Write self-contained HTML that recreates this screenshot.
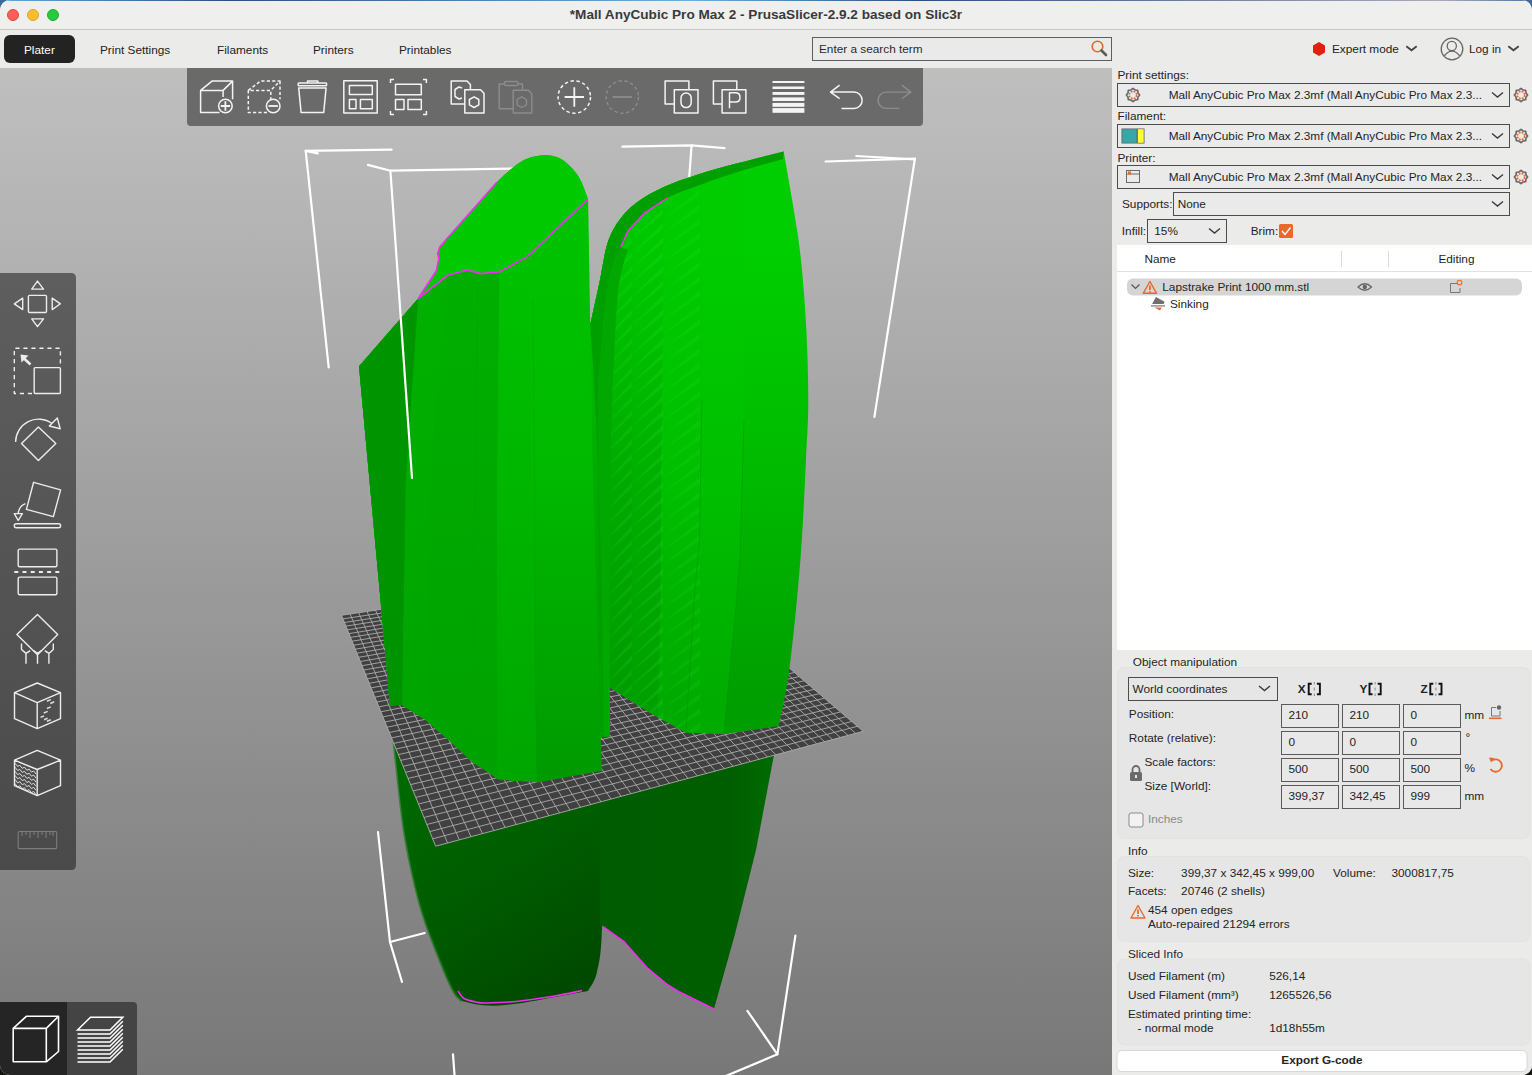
<!DOCTYPE html>
<html><head><meta charset="utf-8">
<style>
*{margin:0;padding:0;box-sizing:border-box}
html,body{width:1532px;height:1075px;overflow:hidden;background:#3d6a9c;font-family:"Liberation Sans",sans-serif;font-size:11.8px;color:#262626}
.a{position:absolute;white-space:nowrap}
#win{position:absolute;left:0;top:0;width:1532px;height:1075px;background:#EBEBEA;border-radius:10px;overflow:hidden}
#strip{position:absolute;left:0;top:0;width:1532px;height:1px;background:linear-gradient(90deg,#5fa8dc 0,#2a4f86 15%,#6ab0e0 45%,#2a4f86 60%,#aab 94%,#4a78a8 100%)}
#title{position:absolute;left:0;top:0;width:1532px;height:30px;background:#EFEFEE;border-bottom:1px solid #C4C4C2}
#title .t{position:absolute;left:0;width:1532px;top:7.5px;text-align:center;font-weight:bold;font-size:13.6px;color:#3A3A3A}
.tl{position:absolute;top:9px;width:12px;height:12px;border-radius:50%}
.tab{position:absolute;top:42.5px;font-size:11.8px;color:#222}
#view{position:absolute;left:0;top:68px;width:1112px;height:1007px;overflow:hidden}
#panel{position:absolute;left:1112px;top:68px;width:420px;height:1007px;background:#EAEAEA;overflow:hidden}
#panel .a{font-size:11.8px;color:#262626}
.t{position:absolute;white-space:nowrap;font-size:11.8px;line-height:14px;color:#242424}

</style></head><body>
<div style="position:absolute;left:0;top:1055px;width:1532px;height:20px;background:#151510"></div>
<div id="win">
<div id="title">
  <div class="tl" style="left:7px;background:#FE5F57;border:1px solid #E2463F"></div>
  <div class="tl" style="left:27px;background:#FEBC2E;border:1px solid #E1A325"></div>
  <div class="tl" style="left:47px;background:#28C840;border:1px solid #1DAD2B"></div>
  <div class="t">*Mall AnyCubic Pro Max 2 - PrusaSlicer-2.9.2 based on Slic3r</div>
</div>
<div id="strip"></div>
<div class="a" style="left:4px;top:35px;width:71px;height:28px;background:#232323;border-radius:6px"></div>
<div class="a tab" style="left:24px;color:#fff">Plater</div>
<div class="a tab" style="left:100px">Print Settings</div>
<div class="a tab" style="left:217px">Filaments</div>
<div class="a tab" style="left:313px">Printers</div>
<div class="a tab" style="left:399px">Printables</div>
<div class="a" style="left:812px;top:37px;width:300px;height:24px;border:1px solid #5E5E5E;background:#EAEAEA"></div>
<div class="a tab" style="left:819px;top:42px;color:#2a2a2a">Enter a search term</div>
<svg class="a" style="left:0;top:0" width="1532" height="68" viewBox="0 0 1532 68">
  <circle cx="1097.5" cy="46.5" r="5.3" fill="none" stroke="#E06A2A" stroke-width="1.6"/>
  <line x1="1101.5" y1="50.5" x2="1106" y2="55" stroke="#5a5a5a" stroke-width="2.6" stroke-linecap="round"/>
  <polygon points="1319,42 1325,45.5 1325,52.5 1319,56 1313,52.5 1313,45.5" fill="#E02010"/>
  <polyline points="1406.3,46.3 1411.5,50.3 1416.7,46.3" fill="none" stroke="#444" stroke-width="1.8"/>
  <circle cx="1452" cy="49" r="10.8" fill="none" stroke="#666" stroke-width="1.3"/>
  <circle cx="1451.8" cy="46" r="4.6" fill="none" stroke="#666" stroke-width="1.3"/>
  <path d="M1444.3 55.8 Q1452 46.5 1459.7 55.8" fill="none" stroke="#666" stroke-width="1.3"/>
  <polyline points="1508.3,46.3 1513.5,50.3 1518.7,46.3" fill="none" stroke="#444" stroke-width="1.8"/>
</svg>
<div class="a tab" style="left:1332px;top:41.7px">Expert mode</div>
<div class="a tab" style="left:1469px;top:41.7px">Log in</div>

<div id="view">
<svg width="1112" height="1007" viewBox="0 68 1112 1007" style="position:absolute;left:0;top:0">
<defs><linearGradient id="bg" x1="0" y1="68" x2="0" y2="1075" gradientUnits="userSpaceOnUse"><stop offset="0" stop-color="#BFBFBF"/><stop offset="1" stop-color="#787878"/></linearGradient><linearGradient id="f1" x1="0" y1="300" x2="0" y2="710" gradientUnits="userSpaceOnUse"><stop offset="0" stop-color="#009500"/><stop offset="1" stop-color="#009300"/></linearGradient><linearGradient id="f2" x1="0" y1="280" x2="0" y2="720" gradientUnits="userSpaceOnUse"><stop offset="0" stop-color="#00B100"/><stop offset="1" stop-color="#00A400"/></linearGradient><linearGradient id="f3" x1="0" y1="270" x2="0" y2="780" gradientUnits="userSpaceOnUse"><stop offset="0" stop-color="#00AF00"/><stop offset="1" stop-color="#00A100"/></linearGradient><linearGradient id="f4" x1="0" y1="260" x2="0" y2="780" gradientUnits="userSpaceOnUse"><stop offset="0" stop-color="#00C100"/><stop offset="0.5" stop-color="#00B400"/><stop offset="1" stop-color="#00A600"/></linearGradient><linearGradient id="f5" x1="0" y1="200" x2="0" y2="780" gradientUnits="userSpaceOnUse"><stop offset="0" stop-color="#00C300"/><stop offset="0.45" stop-color="#00BA00"/><stop offset="1" stop-color="#009A00"/></linearGradient><linearGradient id="r2" x1="0" y1="250" x2="0" y2="700" gradientUnits="userSpaceOnUse"><stop offset="0" stop-color="#00C600"/><stop offset="0.53" stop-color="#00AA00"/><stop offset="1" stop-color="#009C00"/></linearGradient><linearGradient id="r3" x1="0" y1="250" x2="0" y2="700" gradientUnits="userSpaceOnUse"><stop offset="0" stop-color="#00C800"/><stop offset="0.53" stop-color="#00AE00"/><stop offset="1" stop-color="#00A000"/></linearGradient><linearGradient id="r4" x1="0" y1="250" x2="0" y2="700" gradientUnits="userSpaceOnUse"><stop offset="0" stop-color="#00CA00"/><stop offset="0.53" stop-color="#00BE00"/><stop offset="1" stop-color="#00AA00"/></linearGradient><linearGradient id="r5" x1="0" y1="250" x2="0" y2="700" gradientUnits="userSpaceOnUse"><stop offset="0" stop-color="#00CC00"/><stop offset="0.53" stop-color="#00BE00"/><stop offset="1" stop-color="#00AC00"/></linearGradient><linearGradient id="r6" x1="0" y1="250" x2="0" y2="700" gradientUnits="userSpaceOnUse"><stop offset="0" stop-color="#00CE00"/><stop offset="0.53" stop-color="#00B800"/><stop offset="1" stop-color="#009E00"/></linearGradient><linearGradient id="gRx" x1="700" y1="0" x2="808" y2="0" gradientUnits="userSpaceOnUse"><stop offset="0" stop-color="rgba(0,0,0,0)"/><stop offset="1" stop-color="rgba(0,60,0,0.18)"/></linearGradient><linearGradient id="gSL" x1="420" y1="760" x2="560" y2="1000" gradientUnits="userSpaceOnUse"><stop offset="0" stop-color="#006A00"/><stop offset="0.6" stop-color="#005900"/><stop offset="1" stop-color="#004800"/></linearGradient><linearGradient id="gSR" x1="640" y1="0" x2="770" y2="0" gradientUnits="userSpaceOnUse"><stop offset="0" stop-color="#005C00"/><stop offset="0.7" stop-color="#005E00"/><stop offset="1" stop-color="#006A00"/></linearGradient></defs>
<rect x="0" y="68" width="1112" height="1007" fill="url(#bg)"/>
<polyline points="391.6,149.7 305.7,150.9 328.7,367.4" stroke="#FFFFFF" stroke-width="2.2" fill="none" stroke-linecap="round"/>
<line x1="305.7" y1="150.9" x2="317.8" y2="153.3" stroke="#FFFFFF" stroke-width="2.2" fill="none" stroke-linecap="round"/>
<polyline points="367.9,164.9 390.4,170.7 513.8,168.6" stroke="#FFFFFF" stroke-width="2.2" fill="none" stroke-linecap="round"/>
<polyline points="622.4,146.7 691.6,145.4 724.6,148.1" stroke="#FFFFFF" stroke-width="2.2" fill="none" stroke-linecap="round"/>
<line x1="691.6" y1="145.4" x2="689" y2="180" stroke="#FFFFFF" stroke-width="2.2" fill="none" stroke-linecap="round"/>
<polyline points="825.6,161.5 914.9,158.7 874.4,416.9" stroke="#FFFFFF" stroke-width="2.2" fill="none" stroke-linecap="round"/>
<line x1="856.3" y1="156" x2="914.9" y2="159.3" stroke="#FFFFFF" stroke-width="2.2" fill="none" stroke-linecap="round"/>
<path d="M386,660C386.7,667.5 388.3,688.3 390.0,705.0C391.7,721.7 393.5,738.3 396.0,760.0C398.5,781.7 401.0,811.0 405.0,835.0C409.0,859.0 414.5,884.0 420.0,904.0C425.5,924.0 432.5,940.7 438.0,955.0C443.5,969.3 449.0,982.3 453.0,990.0C457.0,997.7 460.5,999.2 462.0,1001.0C466.0,1001.8 477.0,1005.1 486.0,1005.6C495.0,1006.1 504.5,1005.2 516.0,1003.8C527.5,1002.4 543.0,999.1 555.0,997.0C567.0,994.9 582.5,992.0 588.0,991.0C589.5,987.8 594.7,982.5 597.0,972.0C599.3,961.5 601.0,956.3 602.0,928.0C603.0,899.7 602.5,840.0 603.0,802.0C603.5,764.0 604.7,717.0 605.0,700.0Z" fill="url(#gSL)"/>
<path d="M386,660C386.7,667.5 388.3,688.3 390.0,705.0C391.7,721.7 393.5,738.3 396.0,760.0C398.5,781.7 401.0,811.0 405.0,835.0C409.0,859.0 414.5,884.0 420.0,904.0C425.5,924.0 432.5,940.7 438.0,955.0C443.5,969.3 449.0,982.3 453.0,990.0C457.0,997.7 460.5,999.2 462.0,1001.0" fill="none" stroke="#007000" stroke-width="3" opacity="0.55"/>
<polygon points="600.0,700.0 600.0,924.5 624.0,941.7 648.0,968.7 666.0,983.7 678.0,991.2 714.0,1009.0 735.0,934.0 756.0,850.0 773.0,760.0 790.0,680.0" fill="url(#gSR)"/>
<polygon points="341.5,615.3 435.7,846.2 863.2,731.3 670.0,566.0" fill="#404040"/>
<path d="M341.5 615.3L435.7 846.2M341.5 615.3L670.0 566.0M350.1 614.0L447.6 843.0M342.9 618.9L673.2 568.7M358.6 612.7L459.4 839.8M344.4 622.5L676.4 571.5M367.0 611.5L471.0 836.7M345.9 626.1L679.6 574.2M375.4 610.2L482.5 833.6M347.4 629.8L682.9 577.1M383.7 609.0L493.9 830.6M349.0 633.6L686.3 579.9M392.0 607.7L505.2 827.5M350.5 637.4L689.6 582.8M400.1 606.5L516.3 824.5M352.1 641.2L693.0 585.7M408.3 605.3L527.3 821.6M353.7 645.2L696.5 588.7M416.3 604.1L538.2 818.7M355.3 649.2L700.0 591.7M424.3 602.9L548.9 815.8M357.0 653.2L703.5 594.7M432.2 601.7L559.6 812.9M358.6 657.3L707.1 597.8M440.1 600.5L570.1 810.1M360.3 661.5L710.7 600.9M447.9 599.3L580.5 807.3M362.1 665.7L714.4 604.0M455.7 598.2L590.8 804.5M363.8 670.0L718.1 607.2M463.4 597.0L601.0 801.8M365.6 674.4L721.9 610.4M471.0 595.9L611.1 799.1M367.4 678.8L725.7 613.7M478.6 594.7L621.1 796.4M369.2 683.3L729.6 617.0M486.1 593.6L631.0 793.7M371.1 687.9L733.5 620.4M493.6 592.5L640.7 791.1M373.0 692.5L737.5 623.8M501.0 591.4L650.4 788.5M374.9 697.2L741.5 627.2M508.3 590.3L660.0 785.9M376.9 702.0L745.6 630.7M515.6 589.2L669.4 783.4M378.9 706.9L749.7 634.2M522.9 588.1L678.8 780.9M380.9 711.8L753.9 637.8M530.1 587.0L688.1 778.4M382.9 716.9L758.2 641.5M537.2 585.9L697.3 775.9M385.0 722.0L762.5 645.1M544.3 584.9L706.4 773.5M387.2 727.2L766.9 648.9M551.4 583.8L715.4 771.0M389.3 732.5L771.3 652.7M558.4 582.8L724.3 768.6M391.5 737.9L775.8 656.5M565.3 581.7L733.1 766.3M393.8 743.4L780.4 660.4M572.2 580.7L741.8 763.9M396.0 749.0L785.0 664.4M579.0 579.6L750.5 761.6M398.3 754.6L789.7 668.4M585.8 578.6L759.0 759.3M400.7 760.4L794.4 672.5M592.6 577.6L767.5 757.0M403.1 766.3L799.2 676.6M599.3 576.6L775.9 754.8M405.6 772.3L804.1 680.8M605.9 575.6L784.2 752.5M408.0 778.4L809.1 685.0M612.5 574.6L792.5 750.3M410.6 784.6L814.2 689.3M619.1 573.6L800.6 748.1M413.2 790.9L819.3 693.7M625.6 572.7L808.7 745.9M415.8 797.4L824.5 698.2M632.1 571.7L816.7 743.8M418.5 804.0L829.8 702.7M638.5 570.7L824.6 741.7M421.2 810.7L835.1 707.3M644.9 569.8L832.5 739.6M424.0 817.5L840.6 711.9M651.2 568.8L840.3 737.5M426.8 824.5L846.1 716.7M657.5 567.9L848.0 735.4M429.7 831.6L851.7 721.5M663.8 566.9L855.6 733.3M432.7 838.8L857.4 726.3M670.0 566.0L863.2 731.3M435.7 846.2L863.2 731.3" stroke="#ABABAB" stroke-width="0.9" fill="none"/>
<clipPath id="clipR"><path d="M783.7,151.5C775.8,153.5 750.7,159.6 736.3,163.5C721.9,167.4 709.3,170.8 697.2,174.7C685.1,178.6 673.9,182.3 663.7,187.0C653.5,191.7 643.6,197.2 636.0,203.0C628.4,208.8 622.8,215.0 618.0,222.0C613.2,229.0 610.0,235.3 607.0,245.0C604.0,254.7 602.8,266.6 600.0,280.0C597.2,293.4 591.8,317.8 590.2,325.3L588,400L592,700L601.9,736.8L609.7,736.8L609.7,687.3L653.2,714.4L685.9,732.4L725,734.1L778.8,725.9C780.6,716.2 786.0,695.4 789.6,667.7C793.2,640.1 797.7,594.6 800.4,560.0C803.1,525.4 804.7,486.7 806.0,460.0C807.3,433.3 808.3,422.4 808.3,400.0C808.3,377.6 807.4,349.5 806.1,325.4C804.8,301.3 802.8,276.5 800.5,255.6C798.2,234.7 794.9,217.2 792.1,199.8C789.3,182.5 785.1,159.6 783.7,151.5Z"/></clipPath>
<g clip-path="url(#clipR)">
<rect x="585" y="140" width="230" height="605" fill="url(#r6)"/>
<polygon points="585.0,140.0 743.5,140.0 744.0,420.0 740.0,560.0 736.7,600.0 727.0,700.0 723.0,745.0 585.0,745.0" fill="url(#r5)"/>
<polygon points="585.0,140.0 701.5,140.0 701.9,400.0 699.5,540.0 694.2,600.0 687.9,700.0 685.5,745.0 585.0,745.0" fill="url(#r4)"/>
<polygon points="585.0,140.0 664.0,140.0 662.0,400.0 660.5,600.0 657.8,717.3 657.0,745.0 585.0,745.0" fill="url(#r3)"/>
<rect x="585" y="140" width="47" height="605" fill="url(#r2)"/>
<pattern id="stp" patternUnits="userSpaceOnUse" x="632" y="0" width="31" height="14.4" patternTransform="skewY(-38.7)"><polygon points="0,11 31,5.5 31,11" fill="#30FF30" opacity="0.14"/></pattern>
<pattern id="stp2" patternUnits="userSpaceOnUse" x="663" y="5" width="37" height="14.4" patternTransform="skewY(-33)"><polygon points="0,11 37,5.5 37,11" fill="#30FF30" opacity="0.10"/></pattern>
<pattern id="stp3" patternUnits="userSpaceOnUse" x="606" y="9" width="26" height="14.4" patternTransform="skewY(-42)"><polygon points="0,11 26,5.5 26,11" fill="#30FF30" opacity="0.12"/></pattern>
<rect x="632" y="200" width="31" height="540" fill="url(#stp)"/>
<rect x="663" y="190" width="37" height="550" fill="url(#stp2)"/>
<rect x="606" y="240" width="26" height="500" fill="url(#stp3)"/>
<polyline points="701.9,400.0 699.5,540.0 694.2,600.0 687.9,700.0 685.5,745.0" stroke="#008C00" stroke-width="0.8" opacity="0.5" fill="none"/>
<polyline points="744.0,420.0 740.0,560.0 736.7,600.0 727.0,700.0 723.0,745.0" stroke="#008C00" stroke-width="0.8" opacity="0.5" fill="none"/>
</g>
<path d="M602,736.8C601.4,707.3 599.1,615.6 598.5,560.0C597.9,504.4 598.0,436.6 598.4,403.0C598.8,369.4 599.2,377.2 600.6,358.6C602.0,340.0 604.8,307.7 607.0,291.6C609.2,275.5 611.7,269.4 614.0,262.0C616.3,254.6 619.6,249.5 620.7,247.0L628,250C627.3,252.0 625.7,255.1 624.0,262.0C622.3,268.9 619.7,275.5 618.0,291.6C616.3,307.7 615.0,340.0 614.0,358.6C613.0,377.2 612.7,379.4 612.0,403.0C611.3,426.6 610.4,452.2 610.0,500.0C609.6,547.8 609.8,650.5 609.7,690.0C609.7,729.5 609.7,729.0 609.7,736.8Z" fill="#00A800"/>
<path d="M783.7,151.5C775.8,153.5 750.7,159.6 736.3,163.5C721.9,167.4 709.3,170.8 697.2,174.7C685.1,178.6 673.9,182.3 663.7,187.0C653.5,191.7 643.6,197.2 636.0,203.0C628.4,208.8 622.8,215.0 618.0,222.0C613.2,229.0 610.0,235.3 607.0,245.0C604.0,254.7 602.8,266.6 600.0,280.0C597.2,293.4 591.8,317.8 590.2,325.3C591.0,337.8 593.2,360.9 595.0,400.0C596.8,439.1 599.5,503.9 601.0,560.0C602.5,616.1 603.5,707.3 604.0,736.8L602,736.8C601.4,707.3 599.1,615.6 598.5,560.0C597.9,504.4 598.0,436.6 598.4,403.0C598.8,369.4 599.2,377.2 600.6,358.6C602.0,340.0 604.8,307.7 607.0,291.6C609.2,275.5 611.7,269.4 614.0,262.0C616.3,254.6 618.3,252.3 620.7,247.0C623.1,241.7 624.4,236.0 628.5,230.2C632.6,224.4 638.8,217.8 645.3,212.4C651.8,207.0 659.0,202.3 667.6,197.9C676.2,193.5 685.6,190.2 697.0,186.0C708.4,181.8 721.7,177.0 736.0,172.5C750.3,168.0 775.2,161.2 783.0,159.0Z" fill="#009F00"/>
<clipPath id="clipL"><path d="M496.9,182.3C497.6,181.6 498.4,180.5 501.2,177.9C504.0,175.3 509.6,170.1 513.8,166.9C518.0,163.8 521.8,160.9 526.5,159.0C531.2,157.1 537.0,155.6 542.3,155.3C547.6,155.0 553.4,155.5 558.1,157.4C562.9,159.3 567.1,163.2 570.8,166.9C574.5,170.6 577.3,174.1 580.2,179.5C583.1,184.9 586.8,196.0 588.1,199.3L589,250L590.2,325.3L593,480L601.9,770.7L538.8,782.2L499.0,779.6L481.4,767.8L473.6,762.9L452.1,743.1L425.1,719.5L401.9,704.7L389.8,705.6L386.0,660.0L359.0,366.2L418.2,298.5L436.4,270.7L438.8,258.6L437.6,253.7L440.0,246.5L496.9,182.3Z"/></clipPath>
<g clip-path="url(#clipL)">
<rect x="340" y="150" width="270" height="640" fill="url(#f5)"/>
<polygon points="340,150 527.1,150 527.1,256.9 533,560 537,790 340,790" fill="url(#f4)"/>
<polygon points="340,150 499.3,150 499.3,271.9 497,480 497,790 340,790" fill="url(#f3)"/>
<polygon points="340,150 447.3,150 447.3,275.5 430,480 426,790 340,790" fill="url(#f2)"/>
<polygon points="340,150 418.2,150 418.2,298.5 405.8,480 402,705 402,790 340,790" fill="url(#f1)"/>
<path d="M478,280 L471,780" stroke="#009E00" stroke-width="0.7" opacity="0.4"/>
<path d="M533,300 L537,780" stroke="#009800" stroke-width="0.7" opacity="0.4"/>
</g>
<path d="M418.2,298.5L436.4,270.7L438.8,258.6L437.6,253.7L440,246.5L496.9,182.3C497.6,181.6 498.4,180.5 501.2,177.9C504.0,175.3 509.6,170.1 513.8,166.9C518.0,163.8 521.8,160.9 526.5,159.0C531.2,157.1 537.0,155.6 542.3,155.3C547.6,155.0 553.4,155.5 558.1,157.4C562.9,159.3 567.1,163.2 570.8,166.9C574.5,170.6 577.3,174.1 580.2,179.5C583.1,184.9 586.8,196.0 588.1,199.3L527.1,256.9L499.3,271.9L481.1,273.6L466.6,269.9L447.3,275.5Z" fill="#00C900"/>
<polyline points="418.2,298.5 436.4,270.7 438.8,258.6 437.6,253.7 440,246.5 496.9,182.3" stroke="#F22CF2" stroke-width="1.6" fill="none" stroke-linejoin="round"/>
<polyline points="418.2,298.5 447.3,275.5 466.6,269.9 481.1,273.6 499.3,271.9 527.1,256.9 587.6,199.3" stroke="#F22CF2" stroke-width="1.6" fill="none" stroke-linejoin="round"/>
<polyline points="620.7,247 628.5,230.2 645.3,212.4 667.6,197.9" stroke="#F22CF2" stroke-width="1.6" fill="none" stroke-linejoin="round" stroke-width="1.1"/>
<path d="M458,991C459.0,992.2 461.0,996.7 464.0,998.5C467.0,1000.3 472.3,1001.2 476.0,1002.0C479.7,1002.8 479.3,1003.1 486.0,1003.0C492.7,1002.9 504.5,1002.7 516.0,1001.5C527.5,1000.3 544.0,997.8 555.0,996.0C566.0,994.2 577.5,991.4 582.0,990.5" stroke="#F22CF2" stroke-width="1.6" fill="none" stroke-linejoin="round" stroke-width="1.3"/>
<polyline points="603,926.7 624,941.7 648,968.7 666,983.7 678,991.2 714,1009" stroke="#F22CF2" stroke-width="1.6" fill="none" stroke-linejoin="round" stroke-width="1.3"/>
<line x1="390.4" y1="170.7" x2="412" y2="478" stroke="#FFFFFF" stroke-width="2.2" fill="none" stroke-linecap="round"/>
<polyline points="378,832 390,942 402,982" stroke="#FFFFFF" stroke-width="2.2" fill="none" stroke-linecap="round"/>
<line x1="390" y1="942" x2="424.6" y2="933" stroke="#FFFFFF" stroke-width="2.2" fill="none" stroke-linecap="round"/>
<line x1="453" y1="1054.3" x2="454.6" y2="1076" stroke="#FFFFFF" stroke-width="2.2" fill="none" stroke-linecap="round"/>
<polyline points="795.4,935.7 777.4,1054.3 723.4,1077" stroke="#FFFFFF" stroke-width="2.2" fill="none" stroke-linecap="round"/>
<line x1="747.4" y1="1010.8" x2="777.4" y2="1054.3" stroke="#FFFFFF" stroke-width="2.2" fill="none" stroke-linecap="round"/>
<defs>
<linearGradient id="ltb" x1="0" y1="273" x2="0" y2="870" gradientUnits="userSpaceOnUse"><stop offset="0" stop-color="#5E5E5E"/><stop offset="1" stop-color="#4A4A4A"/></linearGradient>
</defs>
<path d="M187,68 H923 V122 Q923,126 919,126 H191 Q187,126 187,122 Z" fill="#6A6A6A"/>
<g fill="none" stroke="#F4F4F4" stroke-width="1.5" stroke-linejoin="round">
 <!-- add -->
 <path d="M219.5,112.6 H200.6 V90.4 H223.1 V97 M200.6,90.4 L212,81.1 H232.6 L223.1,90.4 M232.6,81.1 V99.3"/>
 <circle cx="225.4" cy="106" r="6.8"/>
 <path d="M225.4,101.3 V110.7 M220.7,106 H230.1" stroke-width="1.8"/>
 <!-- delete dashed -->
 <path d="M267,112.6 H248.3 V90.4 H270.8 V99 M248.3,90.4 L260.5,81.1 H280 L270.8,90.4 M280,81.1 V99.3" stroke-dasharray="3.2 2.2"/>
 <circle cx="273.2" cy="106" r="6.8"/>
 <path d="M268.5,106 H277.9" stroke-width="1.8"/>
 <!-- trash -->
 <rect x="298.2" y="83" width="28.4" height="2.8" rx="0.8"/>
 <path d="M307.5,83 V81 H317.8 V83"/>
 <path d="M298.7,87.9 H326.1 L323.7,112.6 H301.1 Z"/>
 <!-- arrange -->
 <rect x="343.8" y="80.7" width="33.4" height="32.4"/>
 <rect x="349.4" y="85.5" width="22.9" height="9"/>
 <rect x="349.4" y="99.4" width="6.6" height="9.3"/>
 <rect x="360.4" y="99.4" width="11.9" height="9.3"/>
 <!-- arrange selection -->
 <path d="M390.5,83 V79.5 H394 M423,79.5 H426.4 V83 M426.4,111 V114.5 H423 M394,114.5 H390.5 V111"/>
 <rect x="395.5" y="84.3" width="25.8" height="10.5"/>
 <rect x="395.5" y="99.4" width="8.5" height="10.2"/>
 <rect x="408" y="99.4" width="13.3" height="10.2"/>
 <!-- copy -->
 <path d="M464.8,104.1 H451.2 V80.9 H467 L470.4,84.5 V89.7"/>
 <path d="M464.8,89.7 H480.5 L484,93.3 V113 H464.8 Z"/>
 <path d="M474.1,96.8 L478.8,99.5 V104.8 L474.1,107.5 L469.4,104.8 V99.5 Z"/>
 <path d="M462,88 L459,87 L455,89.5 V96.5 L459,99 L462,98"/>
 <!-- plus circle -->
 <circle cx="574.3" cy="97" r="16.2" stroke-dasharray="3.4 2.6"/>
 <path d="M574.3,87.3 V106.7 M564.6,97 H584" stroke-width="1.8"/>
 <!-- copy O -->
 <path d="M674.3,103.9 H665.1 V81 H688.9 V89.8"/>
 <rect x="674.3" y="89.8" width="23.7" height="23.2"/>
 <rect x="681" y="93" width="10.2" height="14.6" rx="5"/>
 <!-- copy P -->
 <path d="M722.1,103.9 H713.4 V81 H736.8 V89.8"/>
 <rect x="722.1" y="89.8" width="23.8" height="23.2"/>
 <path d="M729.5,108.3 V92.8 H735.5 Q740,92.8 740,97.5 Q740,102 735.5,102 H729.5"/>
 <!-- undo -->
 <path d="M839.6,85.1 L830.5,92.1 L839.6,98.7 M830.5,92.1 H854 A8.15,8.15 0 0 1 854,108.4 H841.5"/>
</g>
<g fill="#F4F4F4">
 <rect x="772.5" y="81" width="31.9" height="2"/>
 <rect x="772.5" y="86.5" width="31.9" height="2.5"/>
 <rect x="772.5" y="92" width="31.9" height="2.9"/>
 <rect x="772.5" y="97.4" width="31.9" height="3.6"/>
 <rect x="772.5" y="102.9" width="31.9" height="3.9"/>
 <rect x="772.5" y="108.1" width="31.9" height="4.7"/>
</g>
<g fill="none" stroke="#8C8C8C" stroke-width="1.4" stroke-linejoin="round">
 <!-- paste disabled -->
 <path d="M513.2,108.7 H499.2 V84 H504 M518,84 H522.5 V90.2"/>
 <rect x="504.5" y="81.5" width="13.5" height="4" rx="1"/>
 <path d="M513.2,90.2 H528.3 L531.8,93.8 V113 H513.2 Z"/>
 <path d="M521.8,96.8 L526.5,99.5 V104.8 L521.8,107.5 L517.1,104.8 V99.5 Z"/>
 <!-- minus disabled -->
 <circle cx="622.3" cy="97" r="16.2" stroke-dasharray="3.4 2.6"/>
 <path d="M612.6,97 H632" stroke-width="1.8"/>
 <!-- redo -->
 <path d="M901.8,85.1 L910.9,92.1 L901.8,98.7 M910.9,92.1 H886.2 A8.15,8.15 0 0 0 886.2,108.4 H899.4"/>
</g>
<!-- left toolbar -->
<path d="M0,273 H71 Q76,273 76,278 V865 Q76,870 71,870 H0 Z" fill="url(#ltb)"/>
<g fill="none" stroke="#EDEDED" stroke-width="1.4" stroke-linejoin="round">
 <rect x="28.4" y="295.4" width="18.1" height="17.1" rx="1.2"/>
 <path d="M37.5,281.1 L43.5,289.1 H31.7 Z M37.5,326.6 L43.5,318.9 H31.7 Z M14.3,303.8 L22.7,298.2 V309.6 Z M60.4,303.8 L52.2,298.2 V309.6 Z"/>
 <path d="M32,393.5 H14.3 V348.3 H60.4 V366" stroke-dasharray="4.2 3.8"/>
 <rect x="34.2" y="367.6" width="26.2" height="25.9" rx="1"/>
 <path d="M38.4,427.1 L55.8,443.6 L38.4,460.6 L21.5,443.6 Z"/>
 <path d="M15.6,442 A23,23 0 0 1 52.1,423.5"/>
 <path d="M57.3,418 L60.2,428.7 L49.3,426 Z"/>
 <path d="M33.6,482.3 L60.6,489.9 L53.4,516.6 L26.4,509.4 Z"/>
 <rect x="14.3" y="523.8" width="46.3" height="3.9" rx="1.9"/>
 <path d="M25.4,503.6 Q19,506 18.2,513.6"/>
 <path d="M14.3,513.6 H22.4 L18.2,520.5 Z"/>
 <rect x="18.2" y="549.1" width="38.7" height="17.6" rx="1.5"/>
 <path d="M14.3,571.9 H59.9" stroke-width="2" stroke-dasharray="4 4.2"/>
 <rect x="18.2" y="577.1" width="38.7" height="17.6" rx="1.5"/>
 <path d="M37.5,614.5 L57.7,634.5 L37.5,654.7 L16.9,634.5 Z"/>
 <path d="M26,663.8 V653.4 L21.5,649.5 V643.6 M26,653.4 L30.2,650.7 M37.5,663.8 V653.4 L33.5,650.5 M37.5,653.4 L41.5,650.5 M48.9,663.8 V653.4 L53.3,649.5 V643.6 M48.9,653.4 L44.8,650.7"/>
 <path d="M37.2,683 L60.5,692.7 V718.7 L37.2,728.6 L14.5,718.7 V692.7 Z M14.5,692.7 L37.2,702.6 L60.5,692.7 M37.2,702.6 V728.6"/>
 <path d="M37.2,750.4 L60.5,760.2 V785.7 L37.2,795.6 L14.5,785.7 V760.2 Z M14.5,760.2 L37.2,769.5 L60.5,760.2 M37.2,769.5 V795.6"/>
</g>
<g fill="none" stroke="#EDEDED" stroke-width="1" opacity="0.9">
 <path d="M46.9,701.2 L50.8,699.6 M50.3,703.5 L54.2,701.8 M46.9,708.5 L50.8,706.9 M43.8,713 L47.7,711.4 M40.5,717.4 L44,716 M44.1,719.7 L47.6,718.2 M46.9,721.3 L50.8,719.7" stroke-width="1.5"/>
<g clip-path="url(#fz)"><path d="M13,764.5 l2.3,-1.1 l2.3,3.0 l2.3,-1.1 l2.3,3.0 l2.3,-1.1 l2.3,3.0 l2.3,-1.1 l2.3,3.0 l2.3,-1.1 l2.3,3.0 M13,768.6 l2.3,-1.1 l2.3,3.0 l2.3,-1.1 l2.3,3.0 l2.3,-1.1 l2.3,3.0 l2.3,-1.1 l2.3,3.0 l2.3,-1.1 l2.3,3.0 M13,772.7 l2.3,-1.1 l2.3,3.0 l2.3,-1.1 l2.3,3.0 l2.3,-1.1 l2.3,3.0 l2.3,-1.1 l2.3,3.0 l2.3,-1.1 l2.3,3.0 M13,776.8 l2.3,-1.1 l2.3,3.0 l2.3,-1.1 l2.3,3.0 l2.3,-1.1 l2.3,3.0 l2.3,-1.1 l2.3,3.0 l2.3,-1.1 l2.3,3.0 M13,780.9 l2.3,-1.1 l2.3,3.0 l2.3,-1.1 l2.3,3.0 l2.3,-1.1 l2.3,3.0 l2.3,-1.1 l2.3,3.0 l2.3,-1.1 l2.3,3.0 M13,785.0 l2.3,-1.1 l2.3,3.0 l2.3,-1.1 l2.3,3.0 l2.3,-1.1 l2.3,3.0 l2.3,-1.1 l2.3,3.0 l2.3,-1.1 l2.3,3.0 M13,789.1 l2.3,-1.1 l2.3,3.0 l2.3,-1.1 l2.3,3.0 l2.3,-1.1 l2.3,3.0 l2.3,-1.1 l2.3,3.0 l2.3,-1.1 l2.3,3.0 "/></g>
</g>
<g fill="none" stroke="#7C7C7C" stroke-width="1.1">
 <rect x="18.2" y="831.5" width="38.5" height="17.1" rx="1"/>
 <path d="M22,832 V836 M26,832 V835 M30,832 V838 M34,832 V835 M38,832 V838 M42,832 V835 M46,832 V838 M50,832 V835 M53,832 V836"/>
</g>
<path d="M20.5,354.5 L28.5,355.5 L21.5,362.5 Z" fill="#EDEDED"/>
<line x1="24" y1="358.5" x2="30.5" y2="364.5" stroke="#EDEDED" stroke-width="2.6"/>
<clipPath id="fz"><path d="M14.5,760.2 L37.2,769.5 V795.6 L14.5,785.7 Z"/></clipPath>
<!-- view switcher -->
<path d="M0,1002 H67 V1075 H0 Z" fill="#252525"/>
<path d="M67,1002 H133 Q137,1002 137,1006 V1075 H67 Z" fill="#444444"/>
<g fill="none" stroke="#FFFFFF" stroke-width="1.6" stroke-linejoin="round">
 <path d="M13.5,1053 V1020 H46 V1061.5 H13.5 Z" opacity="0"/>
 <path d="M13.2,1028.4 H46.3 V1061.8 H13.2 Z M13.2,1028.4 L26.3,1016.3 H58.5 L46.3,1028.4 M58.5,1016.3 V1051.5 L46.3,1061.8"/>
</g>
<g fill="none" stroke="#FFFFFF" stroke-width="1.5">
 <path d="M77.5,1030 L90.5,1017.3 H122.8 L110,1030 Z"/>
 <path d="M77.5,1034 H110 L122.8,1021.3 M77.5,1038 H110 L122.8,1025.3 M77.5,1042 H110 L122.8,1029.3 M77.5,1046 H110 L122.8,1033.3 M77.5,1050 H110 L122.8,1037.3 M77.5,1054 H110 L122.8,1041.3 M77.5,1058 H110 L122.8,1045.3 M77.5,1062 H110 L122.8,1049.3"/>
</g>

</svg>
</div>
<div id="panel">
<svg width="420" height="1007" viewBox="1112 68 420 1007" style="position:absolute;left:0;top:0">
<rect x="1112" y="68" width="420" height="1007" fill="#EBEBEA"/>
<g fill="#EAEAEA" stroke="#4C4C4C" stroke-width="1">
 <rect x="1117.5" y="83.5" width="392" height="23"/>
 <rect x="1117.5" y="124.5" width="392" height="23"/>
 <rect x="1117.5" y="165.5" width="392" height="23"/>
 <rect x="1173.5" y="192.5" width="336" height="23"/>
 <rect x="1147.5" y="219.5" width="79" height="23"/>
</g>
<g fill="none" stroke="#3A3A3A" stroke-width="1.4">
 <polyline points="1492,92.5 1497.5,97 1503,92.5"/>
 <polyline points="1492,133.5 1497.5,138 1503,133.5"/>
 <polyline points="1492,174.5 1497.5,179 1503,174.5"/>
 <polyline points="1492,201.5 1497.5,206 1503,201.5"/>
 <polyline points="1209,228.5 1214.5,233 1220,228.5"/>
</g>
<!-- gears -->
<g id="gear">
 <polygon points="1133.00,88.40 1135.07,90.01 1137.67,90.33 1137.99,92.93 1139.60,95.00 1137.99,97.07 1137.67,99.67 1135.07,99.99 1133.00,101.60 1130.93,99.99 1128.33,99.67 1128.01,97.07 1126.40,95.00 1128.01,92.93 1128.33,90.33 1130.93,90.01" fill="none" stroke="#6A6A6A" stroke-width="1.7" stroke-linejoin="round"/>
 <circle cx="1133" cy="95" r="3.6" fill="none" stroke="#E8692A" stroke-width="1.5" stroke-dasharray="1.9 0.95"/>
</g>
<use href="#gear" x="388" y="0"/>
<use href="#gear" x="388" y="41"/>
<use href="#gear" x="388" y="82"/>
<!-- filament swatch -->
<rect x="1121.5" y="128.5" width="23" height="15" fill="#5C5A66"/>
<rect x="1122.3" y="129.2" width="14.3" height="13.6" fill="#3BA6A8"/>
<rect x="1137.8" y="129.2" width="5.9" height="13.6" fill="#FFFF33"/>
<!-- printer icon -->
<rect x="1126.5" y="170.5" width="13" height="12" fill="none" stroke="#6A6A6A" stroke-width="1"/>
<line x1="1126.5" y1="174" x2="1139.5" y2="174" stroke="#6A6A6A" stroke-width="1"/>
<rect x="1128" y="171.5" width="3" height="3" fill="#E8692A"/>
<!-- brim checkbox -->
<rect x="1279" y="224" width="14" height="14" rx="1.5" fill="#E8692A"/>
<polyline points="1282,231 1285,234.5 1290.5,227.5" fill="none" stroke="#FFFFFF" stroke-width="1.3"/>
<!-- list -->
<rect x="1117" y="245" width="415" height="405" fill="#FFFFFF"/>
<line x1="1117" y1="271.5" x2="1532" y2="271.5" stroke="#E2E2E2" stroke-width="1"/>
<line x1="1341.5" y1="251" x2="1341.5" y2="267" stroke="#DADADA" stroke-width="1"/>
<line x1="1388.5" y1="251" x2="1388.5" y2="267" stroke="#DADADA" stroke-width="1"/>
<rect x="1127" y="278.5" width="395" height="17" rx="6" fill="#D5D5D5"/>
<polyline points="1131.5,284.5 1135.5,288.5 1139.5,284.5" fill="none" stroke="#555" stroke-width="1.2"/>
<path d="M1149.9,281.5 L1156.6,293.3 H1143.2 Z" fill="none" stroke="#E8692A" stroke-width="1.4" stroke-linejoin="round"/>
<line x1="1149.9" y1="285.5" x2="1149.9" y2="290" stroke="#E8692A" stroke-width="1.8"/>
<rect x="1149" y="291.2" width="1.8" height="1.5" fill="#E8692A"/>
<path d="M1358,287 Q1364.8,280.5 1371.5,287 Q1364.8,293.5 1358,287 Z" fill="none" stroke="#666" stroke-width="1.2"/>
<circle cx="1364.8" cy="287" r="2.2" fill="#666"/>
<path d="M1457,283.5 H1450.5 V292.5 H1460 V288" fill="none" stroke="#777" stroke-width="1"/>
<circle cx="1459.5" cy="282.5" r="2.3" fill="none" stroke="#E8692A" stroke-width="1.1"/>
<path d="M1156,297.1 L1164.6,301.8 L1163.5,303.9 H1152.1 Z" fill="#6F6F6F"/>
<rect x="1150.9" y="305.2" width="14.1" height="1.4" fill="#8A8A8A"/>
<path d="M1154.6,307.6 H1161.7 L1160,310.5 Z" fill="#E8692A"/>
<!-- groups -->
<rect x="1117.5" y="667.5" width="412.5" height="171" rx="7" fill="#E6E6E6" stroke="#E2E2E2"/>
<rect x="1117.5" y="856.5" width="412.5" height="85" rx="7" fill="#E6E6E6" stroke="#E2E2E2"/>
<rect x="1117.5" y="959" width="412.5" height="86" rx="7" fill="#E6E6E6" stroke="#E2E2E2"/>
<rect x="1128.5" y="677.5" width="149" height="23" fill="#E6E6E6" stroke="#4C4C4C"/>
<polyline points="1259,686 1264.5,690.5 1270,686" fill="none" stroke="#3A3A3A" stroke-width="1.4"/>
<path d="M1311.7,683.8 H1308.7 V694.2 H1311.7 M1316.9,683.8 H1319.9 V694.2 H1316.9" fill="none" stroke="#111" stroke-width="1.9"/><path d="M1314.3,682 V684.5 M1314.3,693.5 V696 M1314.3,687.5 V690.5" stroke="#888" stroke-width="1"/><path d="M1372.5,683.8 H1369.5 V694.2 H1372.5 M1377.7,683.8 H1380.7 V694.2 H1377.7" fill="none" stroke="#111" stroke-width="1.9"/><path d="M1375.1,682 V684.5 M1375.1,693.5 V696 M1375.1,687.5 V690.5" stroke="#888" stroke-width="1"/><path d="M1433.3,683.8 H1430.3 V694.2 H1433.3 M1438.5,683.8 H1441.5 V694.2 H1438.5" fill="none" stroke="#111" stroke-width="1.9"/><path d="M1435.9,682 V684.5 M1435.9,693.5 V696 M1435.9,687.5 V690.5" stroke="#888" stroke-width="1"/>
<g fill="#E8E8E8" stroke="#5A5A5A" stroke-width="1">
 <rect x="1281.5" y="704.5" width="57" height="23"/><rect x="1342.5" y="704.5" width="57" height="23"/><rect x="1403.5" y="704.5" width="57" height="23"/>
 <rect x="1281.5" y="731.5" width="57" height="23"/><rect x="1342.5" y="731.5" width="57" height="23"/><rect x="1403.5" y="731.5" width="57" height="23"/>
 <rect x="1281.5" y="758.5" width="57" height="23"/><rect x="1342.5" y="758.5" width="57" height="23"/><rect x="1403.5" y="758.5" width="57" height="23"/>
 <rect x="1281.5" y="785.5" width="57" height="23"/><rect x="1342.5" y="785.5" width="57" height="23"/><rect x="1403.5" y="785.5" width="57" height="23"/>
</g>
<!-- drop to bed icon -->
<path d="M1496,707.5 H1491.5 V716 H1500 V711" fill="none" stroke="#777" stroke-width="1"/>
<circle cx="1499" cy="707.5" r="2.2" fill="#666"/>
<rect x="1489" y="717.5" width="12.5" height="1.6" fill="#E8692A"/>
<!-- reset arrow -->
<path d="M1492,760.5 A6.2,6.2 0 1 1 1490.5,769" fill="none" stroke="#E8692A" stroke-width="1.8"/>
<path d="M1489,757.5 L1494.5,758 L1491,762.5 Z" fill="#E8692A"/>
<!-- lock -->
<rect x="1130" y="772" width="12" height="9" rx="1.5" fill="#6A6A6A"/>
<path d="M1132.5,772 V769.5 A3.5,3.5 0 0 1 1139.5,769.5 V772" fill="none" stroke="#6A6A6A" stroke-width="1.8"/>
<rect x="1135" y="775" width="2" height="3" fill="#E6E6E6"/>
<!-- inches checkbox -->
<rect x="1129" y="813" width="14" height="14" rx="2" fill="#F2F2F2" stroke="#8A8A8A" stroke-width="1"/>
<!-- warning -->
<path d="M1138,905.5 L1145,918 H1131 Z" fill="none" stroke="#E8692A" stroke-width="1.4" stroke-linejoin="round"/>
<line x1="1138" y1="909.5" x2="1138" y2="914" stroke="#E8692A" stroke-width="1.8"/>
<rect x="1137.1" y="915" width="1.8" height="1.5" fill="#E8692A"/>
<!-- export button -->
<rect x="1117" y="1050.5" width="410" height="21" rx="5" fill="#FFFFFF" stroke="#D0D0D0" stroke-width="0.8"/>

</svg>
</div>
<div class="t" style="left:1117.5px;top:68.0px;">Print settings:</div>
<div class="t" style="left:1168.7px;top:88.0px;">Mall AnyCubic Pro Max 2.3mf (Mall AnyCubic Pro Max 2.3...</div>
<div class="t" style="left:1117.5px;top:109.4px;">Filament:</div>
<div class="t" style="left:1168.7px;top:129.3px;">Mall AnyCubic Pro Max 2.3mf (Mall AnyCubic Pro Max 2.3...</div>
<div class="t" style="left:1117.5px;top:150.7px;">Printer:</div>
<div class="t" style="left:1168.7px;top:170.3px;">Mall AnyCubic Pro Max 2.3mf (Mall AnyCubic Pro Max 2.3...</div>
<div class="t" style="left:1122px;top:196.7px;">Supports:</div>
<div class="t" style="left:1177.7px;top:196.7px;">None</div>
<div class="t" style="left:1121.8px;top:223.7px;">Infill:</div>
<div class="t" style="left:1154.3px;top:223.7px;">15%</div>
<div class="t" style="left:1250.7px;top:223.7px;">Brim:</div>
<div class="t" style="left:1144.4px;top:252.0px;">Name</div>
<div class="t" style="left:1438.4px;top:252.0px;">Editing</div>
<div class="t" style="left:1162.3px;top:279.6px;">Lapstrake Print 1000 mm.stl</div>
<div class="t" style="left:1170px;top:296.7px;">Sinking</div>
<div class="t" style="left:1132.8px;top:654.9px;">Object manipulation</div>
<div class="t" style="left:1132.5px;top:682.0px;">World coordinates</div>
<div class="t" style="left:1297.7px;top:682.0px;font-weight:bold">X</div>
<div class="t" style="left:1359.6px;top:682.0px;font-weight:bold">Y</div>
<div class="t" style="left:1420.4px;top:682.0px;font-weight:bold">Z</div>
<div class="t" style="left:1128.8px;top:707.0px;">Position:</div>
<div class="t" style="left:1128.8px;top:730.7px;">Rotate (relative):</div>
<div class="t" style="left:1144.4px;top:754.9px;">Scale factors:</div>
<div class="t" style="left:1144.4px;top:778.9px;">Size [World]:</div>
<div class="t" style="left:1288.5px;top:707.5px;">210</div>
<div class="t" style="left:1349.5px;top:707.5px;">210</div>
<div class="t" style="left:1410.5px;top:707.5px;">0</div>
<div class="t" style="left:1288.5px;top:734.5px;">0</div>
<div class="t" style="left:1349.5px;top:734.5px;">0</div>
<div class="t" style="left:1410.5px;top:734.5px;">0</div>
<div class="t" style="left:1288.5px;top:761.5px;">500</div>
<div class="t" style="left:1349.5px;top:761.5px;">500</div>
<div class="t" style="left:1410.5px;top:761.5px;">500</div>
<div class="t" style="left:1288.5px;top:788.5px;">399,37</div>
<div class="t" style="left:1349.5px;top:788.5px;">342,45</div>
<div class="t" style="left:1410.5px;top:788.5px;">999</div>
<div class="t" style="left:1464.5px;top:707.5px;">mm</div>
<div class="t" style="left:1465.5px;top:730.0px;">°</div>
<div class="t" style="left:1464.5px;top:761.0px;">%</div>
<div class="t" style="left:1464.5px;top:788.5px;">mm</div>
<div class="t" style="left:1148px;top:811.5px;color:#8a8a8a">Inches</div>
<div class="t" style="left:1127.9px;top:844.2px;">Info</div>
<div class="t" style="left:1127.9px;top:865.9px;">Size:</div>
<div class="t" style="left:1181.1px;top:865.9px;">399,37 x 342,45 x 999,00</div>
<div class="t" style="left:1333.1px;top:865.9px;">Volume:</div>
<div class="t" style="left:1391.5px;top:865.9px;">3000817,75</div>
<div class="t" style="left:1127.9px;top:884.4px;">Facets:</div>
<div class="t" style="left:1181.1px;top:884.4px;">20746 (2 shells)</div>
<div class="t" style="left:1148px;top:902.6px;">454 open edges</div>
<div class="t" style="left:1148px;top:916.9px;">Auto-repaired 21294 errors</div>
<div class="t" style="left:1127.9px;top:946.6px;">Sliced Info</div>
<div class="t" style="left:1127.9px;top:968.7px;">Used Filament (m)</div>
<div class="t" style="left:1269.2px;top:968.7px;">526,14</div>
<div class="t" style="left:1127.9px;top:987.7px;">Used Filament (mm³)</div>
<div class="t" style="left:1269.2px;top:987.7px;">1265526,56</div>
<div class="t" style="left:1127.9px;top:1007.0px;">Estimated printing time:</div>
<div class="t" style="left:1137.5px;top:1021.0px;">- normal mode</div>
<div class="t" style="left:1269.2px;top:1021.0px;">1d18h55m</div>
<div class="t" style="left:1281.3px;top:1053.3px;font-weight:bold">Export G-code</div>
</div>
</body></html>
